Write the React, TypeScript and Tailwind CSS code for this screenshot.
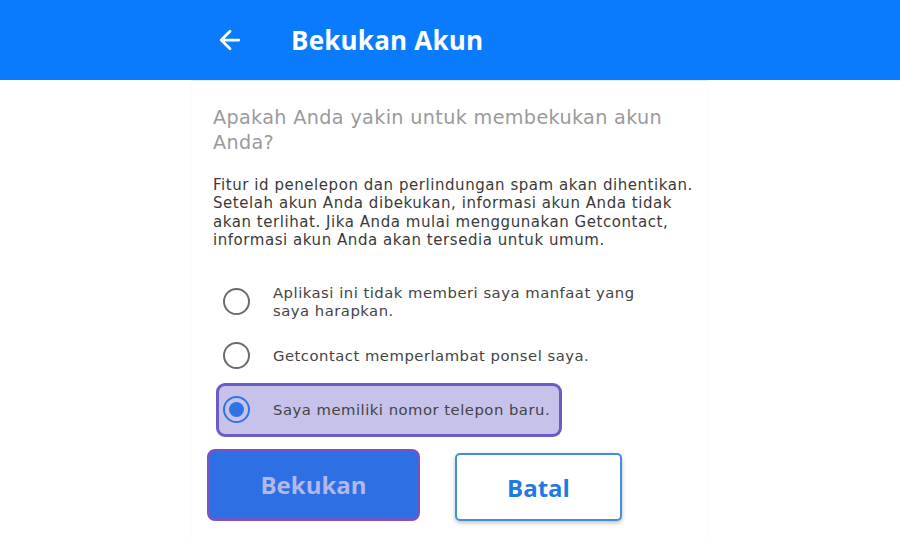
import { ArrowLeft } from 'lucide-react';

const REASONS = [
  ['Aplikasi ini tidak memberi saya manfaat yang', 'saya harapkan.'],
  ['Getcontact memperlambat ponsel saya.'],
  ['Saya memiliki nomor telepon baru.'],
];

const BODY = [
  'Fitur id penelepon dan perlindungan spam akan dihentikan.',
  'Setelah akun Anda dibekukan, informasi akun Anda tidak',
  'akan terlihat. Jika Anda mulai menggunakan Getcontact,',
  'informasi akun Anda akan tersedia untuk umum.',
];

function Radio({ checked }: { checked: boolean }) {
  return (
    <span
      className={`flex h-[27px] w-[27px] shrink-0 items-center justify-center rounded-full border-[2.5px] ${
        checked ? 'border-[#2f74e6]' : 'border-[#6b6b6b]'
      }`}
    >
      {checked && <span className="h-[15px] w-[15px] rounded-full bg-[#2f74e6]" />}
    </span>
  );
}

export default function App() {
  const selected = 2;

  return (
    <div className="flex h-[539px] w-[900px] flex-col overflow-hidden bg-white font-['Open_Sans',sans-serif]">
      <header className="flex h-[80px] shrink-0 items-center bg-[#0a7bfd] pl-[215px] text-white">
        <ArrowLeft size={30} strokeWidth={2.2} />
        <h1 className="ml-[46px] text-[26px] font-bold tracking-[0.2px]">Bekukan Akun</h1>
      </header>

      <main className="mx-auto w-[516px] flex-1 border-t border-[#e6eef8] px-[21px] pt-[24px] shadow-[0_1px_3px_rgba(0,0,0,0.04)]">
        <h2 className="font-['DejaVu_Sans',sans-serif] text-[19.2px] leading-[25px] tracking-[0.35px] whitespace-nowrap text-[#9a9a9a]">
          Apakah Anda yakin untuk membekukan akun
          <br />
          Anda?
        </h2>

        <p className="mt-[21px] font-['DejaVu_Sans',sans-serif] text-[15px] leading-[18.4px] tracking-[0.55px] whitespace-nowrap text-[#3a3a3a]">
          {BODY.map((line) => (
            <span key={line} className="block">
              {line}
            </span>
          ))}
        </p>

        <div className="mt-[25px] ml-[3px] flex flex-col">
          {REASONS.map((lines, i) => (
            <label
              key={lines[0]}
              className={`flex h-[54px] w-[346px] items-center gap-[23px] rounded-[9px] border-[3px] pl-[4px] ${
                i === selected ? 'border-[#6a5cc7] bg-[#c6c2ea]' : 'border-transparent'
              }`}
            >
              <Radio checked={i === selected} />
              <span className="shrink-0 font-['DejaVu_Sans',sans-serif] text-[14.8px] leading-[18px] tracking-[0.5px] whitespace-nowrap text-[#444]">
                {lines.map((l) => (
                  <span key={l} className="block">
                    {l}
                  </span>
                ))}
              </span>
            </label>
          ))}
        </div>

        <div className="mt-[12px] flex items-end gap-[35px]">
          <button className="-ml-[6px] h-[72px] w-[213px] rounded-[8px] border-[3px] border-[#7555c6] bg-[#2f6fe4] text-[24px] font-bold text-[#b2b8ea]">
            Bekukan
          </button>
          <button className="h-[68px] w-[167px] rounded-[5px] border-2 border-[#3f8ee2] bg-white pt-[2px] text-[24px] font-bold text-[#1f7ae2] shadow-[0_2px_4px_rgba(0,0,0,0.25)]">
            Batal
          </button>
        </div>
      </main>
    </div>
  );
}
